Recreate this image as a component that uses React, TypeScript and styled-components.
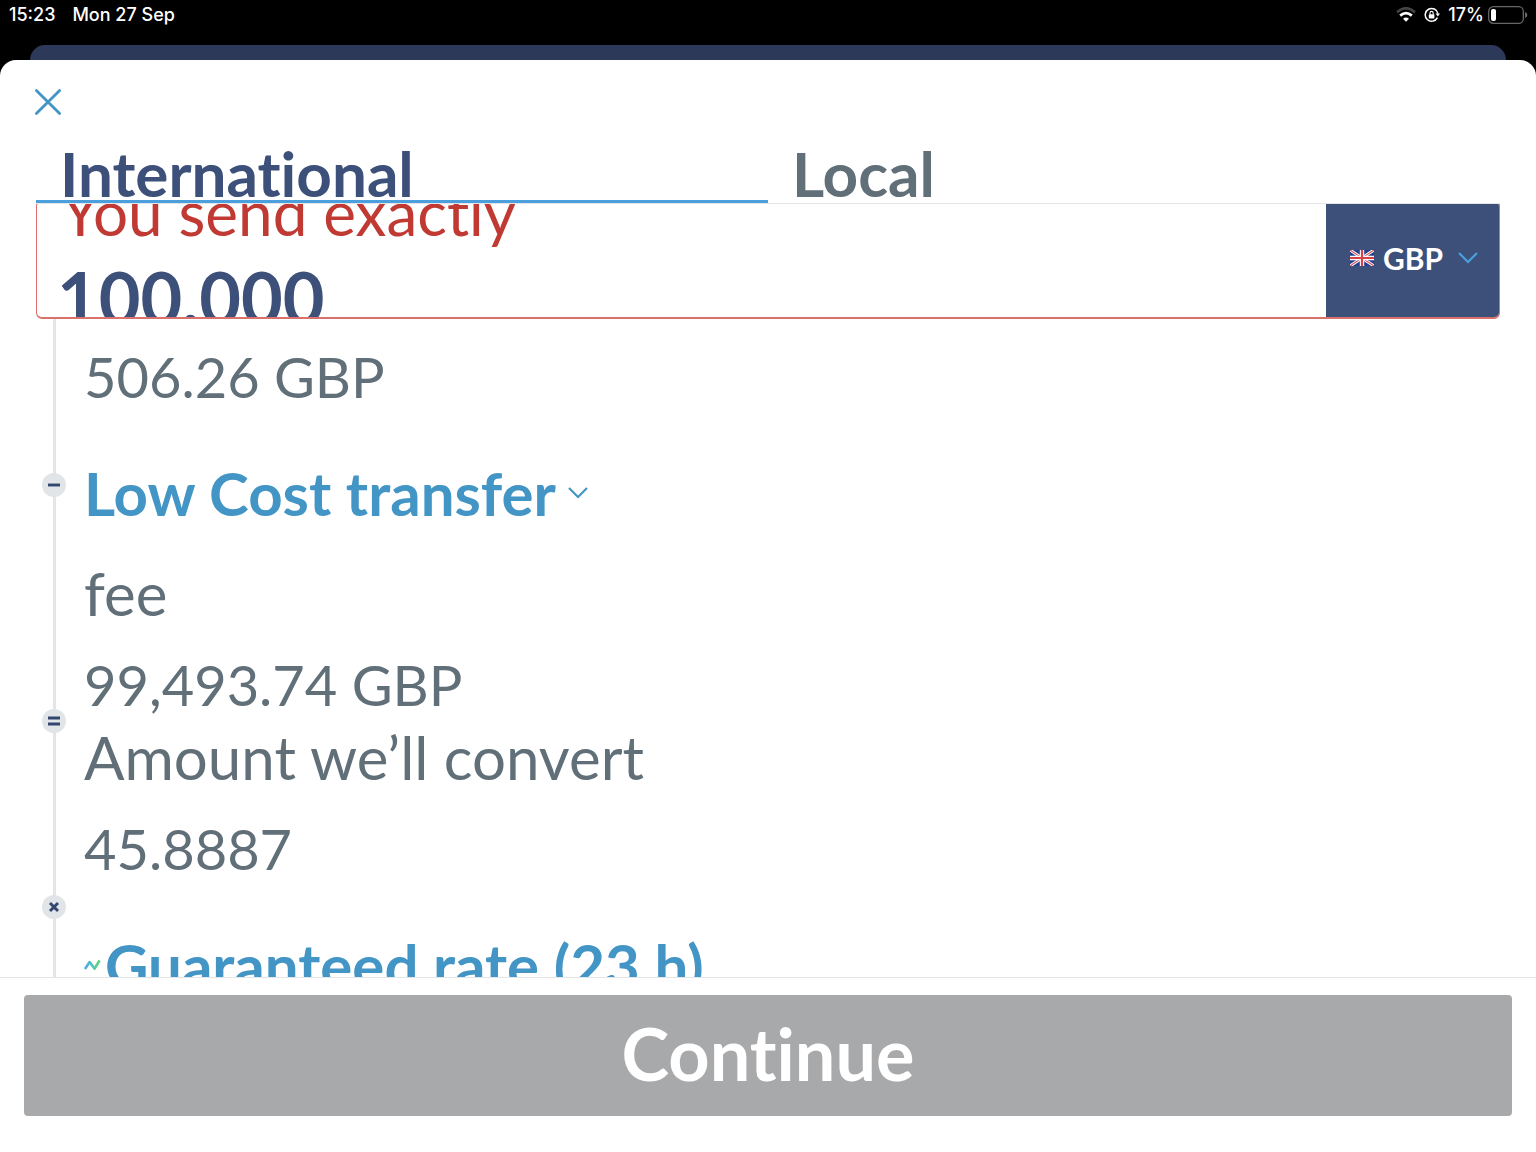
import React, { useState } from "react";
import styled, { createGlobalStyle } from "styled-components";

const color = {
  navy: "#3d5079",
  navyDeep: "#2c3959",
  navyInk: "#33466f",
  blue: "#4295c5",
  sky: "#4a9fdc",
  slate: "#616f79",
  red: "#c03a33",
  redLine: "#dc706c",
  rail: "#e4e5e7",
  badge: "#e1e5e8",
  disabled: "#a8a9ab",
};

const GlobalStyle = createGlobalStyle`
  *, *::before, *::after { box-sizing: border-box; }
  body {
    margin: 0;
    background: #000;
    font-family: Lato, "Open Sans", sans-serif;
    font-variant-ligatures: none;
  }
  button, input, select { font: inherit; font-variant-ligatures: none; color: inherit; }
  button { padding: 0; border: 0; background: none; cursor: pointer; text-align: left; }
`;

const Screen = styled.div`
  display: flex;
  flex-direction: column;
  height: 100vh;
  overflow: hidden;
`;

const StatusBar = styled.header`
  display: flex;
  flex: none;
  justify-content: space-between;
  height: 45px;
  padding: 5px 8px 0 9px;
  color: #fff;
  font: 500 18px/20px Inter, sans-serif;
`;

const StatusGroup = styled.div<{ $gap: number }>`
  display: flex;
  align-items: center;
  height: 20px;
  gap: ${(p) => p.$gap}px;
`;

const Charge = styled.span`
  display: flex;
  align-items: center;
  gap: 4px;
`;

const BackSheet = styled.div`
  flex: none;
  height: 15px;
  margin: 0 30px;
  border-radius: 15px 15px 0 0;
  background: ${color.navyDeep};
`;

const Sheet = styled.main`
  display: flex;
  flex: 1;
  flex-direction: column;
  min-height: 0;
  border-radius: 16px 16px 0 0;
  background: #fff;
`;

const CloseButton = styled.button`
  display: flex;
  flex: none;
  width: 28px;
  height: 28px;
  margin: 28px 34px 24px;
  color: ${color.blue};
`;

const Tabs = styled.div`
  display: flex;
  flex: none;
  margin: 0 36px;
  border-bottom: 1px solid ${color.rail};
`;

const Tab = styled.button<{ $active: boolean }>`
  flex: 1;
  height: 63px;
  padding: 0 24px;
  border-bottom: 3px solid ${(p) => (p.$active ? color.sky : "transparent")};
  color: ${(p) => (p.$active ? color.navy : color.slate)};
  font-size: 62px;
  font-weight: 700;
  line-height: 66px;
`;

const Scroller = styled.section`
  flex: 1;
  min-height: 0;
  padding: 0 36px;
  overflow: hidden;
`;

const Field = styled.div`
  display: flex;
  height: 119px;
  margin-top: -4px;
  overflow: hidden;
  border: solid ${color.redLine};
  border-width: 2px 1px;
  border-radius: 6px;
`;

const FieldBody = styled.div`
  flex: 1;
  min-width: 0;
  padding-left: 20px;
`;

const FieldLabel = styled.label`
  display: block;
  margin-top: -26px;
  padding-left: 4px;
  color: ${color.red};
  font-size: 62px;
  line-height: 72px;
`;

const AmountInput = styled.input`
  display: block;
  width: 100%;
  height: 98px;
  padding: 0;
  border: 0;
  outline: 0;
  background: none;
  color: ${color.navy};
  font-size: 72px;
  font-weight: 700;
`;

const Currency = styled.div`
  display: flex;
  flex: none;
  align-items: center;
  width: 173px;
  gap: 9px;
  padding: 0 0 4px 24px;
  background: ${color.navy};
  color: #fff;
`;

const CurrencySelect = styled.select`
  width: 66px;
  padding: 0;
  border: 0;
  outline: 0;
  appearance: none;
  background: none;
  font-size: 30px;
  font-weight: 700;
  line-height: 36px;
`;

const Steps = styled.ul`
  margin: 0 0 0 17px;
  padding: 12px 0 0;
  border-left: 3px solid ${color.rail};
  list-style: none;
`;

const Step = styled.li`
  display: flex;
  align-items: center;
  gap: 18px;
  padding: 10px 0;
  margin-left: -14px;
  color: ${color.slate};
  font-size: 60px;
  line-height: 72px;
`;

const Figure = styled.div`
  font-size: 56px;
`;

const Badge = styled.span`
  display: flex;
  flex: none;
  width: 24px;
  height: 24px;
  border-radius: 50%;
  background: ${color.badge};
  color: ${color.navyInk};
`;

const StepButton = styled.button`
  display: flex;
  align-items: center;
  gap: 4px;
  color: ${color.blue};
  font-weight: 700;
`;

const OptionButton = styled(StepButton)`
  gap: 12px;
  margin: 44px 0 28px;
`;

const RateButton = styled(StepButton)`
  margin-top: 44px;
`;

const Footer = styled.footer`
  flex: none;
  padding: 17px 24px 36px;
  border-top: 1px solid ${color.rail};
`;

const ContinueButton = styled.button`
  display: block;
  width: 100%;
  height: 121px;
  padding-bottom: 6px;
  border-radius: 4px;
  background: ${color.disabled};
  color: #fff;
  font-size: 72px;
  font-weight: 700;
  line-height: 84px;
  text-align: center;
`;

const WifiIcon = () => (
  <svg width="20" height="16" viewBox="0 0 20 16" aria-hidden="true">
    <path d="M1 5.2Q10-2.8 19 5.2" fill="none" stroke="#444" strokeWidth="2.6" />
    <path d="M4.2 8.6Q10 3.6 15.8 8.6" fill="none" stroke="#fff" strokeWidth="2.8" />
    <path d="M7 11.8Q10 9.2 13 11.8L10 14.8Z" fill="#fff" />
  </svg>
);

const RotationLockIcon = () => (
  <svg width="16" height="16" viewBox="0 0 16 16" fill="none" stroke="#fff" aria-hidden="true">
    <path d="M13.4 10.6A6.4 6.4 0 1 1 13.9 6.6" strokeWidth="1.5" />
    <path d="M11.6 6.6h4.4l-2.2 3Z" fill="#fff" stroke="none" />
    <rect x="4.8" y="7.2" width="5.6" height="4.2" rx=".6" fill="#fff" stroke="none" />
    <path d="M6 7.4V6a1.6 1.6 0 0 1 3.2 0v1.4" strokeWidth="1.1" />
  </svg>
);

const BatteryIcon = () => (
  <svg width="40" height="18" viewBox="0 0 40 18" aria-hidden="true">
    <rect x=".7" y=".7" width="34.6" height="16.6" rx="4.6" fill="none" stroke="#666" strokeWidth="1.3" />
    <rect x="3" y="3" width="5" height="12" rx="2" fill="#fff" />
    <path d="M37 6v6q2.4-1 2.4-3T37 6Z" fill="#666" />
  </svg>
);

const CloseIcon = () => (
  <svg width="28" height="28" viewBox="0 0 28 28" fill="none" stroke="currentColor" strokeWidth="2.8" strokeLinecap="round" aria-hidden="true">
    <path d="M2.4 2.4 25.6 25.6M25.6 2.4 2.4 25.6" />
  </svg>
);

const Chevron = ({ tint }: { tint: string }) => (
  <svg width="20" height="12" viewBox="0 0 20 12" fill="none" stroke={tint} strokeWidth="2.2" aria-hidden="true">
    <path d="M1 1 10 10 19 1" />
  </svg>
);

const FlagIcon = () => (
  <svg width="24" height="16" viewBox="0 0 24 16" aria-hidden="true">
    <rect width="24" height="16" fill="#25408f" />
    <path d="M0 0 24 16M24 0 0 16" stroke="#fff" strokeWidth="3" />
    <path d="M0 0 24 16M24 0 0 16" stroke="#d9505a" strokeWidth="1.1" />
    <path d="M12 0V16M0 8H24" stroke="#fff" strokeWidth="4.4" />
    <path d="M12 0V16M0 8H24" stroke="#d9404a" strokeWidth="2.2" />
  </svg>
);

const signPaths = {
  minus: "M6 12H18",
  equals: "M6 9H18M6 15H18",
  times: "M8 8 16 16M16 8 8 16",
};

const SignBadge = ({ sign }: { sign: keyof typeof signPaths }) => (
  <Badge>
    <svg width="24" height="24" viewBox="0 0 24 24" fill="none" stroke="currentColor" strokeWidth="2.9" aria-hidden="true">
      <path d={signPaths[sign]} />
    </svg>
  </Badge>
);

const RateIcon = () => (
  <svg width="17" height="12" viewBox="0 0 17 12" fill="none" strokeWidth="2.6" strokeLinejoin="round" aria-hidden="true">
    <defs>
      <linearGradient id="rate" x1="0" x2="1" y1="0" y2="0">
        <stop offset="0" stopColor="#46a9e8" />
        <stop offset=".55" stopColor="#56c8b0" />
        <stop offset="1" stopColor="#5fd07c" />
      </linearGradient>
    </defs>
    <path d="M1 10 5.6 3 10.6 9.6 15.6 1.4" stroke="url(#rate)" />
  </svg>
);

const tabs = ["International", "Local"];

export default function App() {
  const [active, setActive] = useState(tabs[0]);
  const [amount, setAmount] = useState("100,000");

  return (
    <>
      <GlobalStyle />
      <Screen>
        <StatusBar>
          <StatusGroup $gap={17}>
            <span>15:23</span>
            <span>Mon 27 Sep</span>
          </StatusGroup>
          <StatusGroup $gap={8}>
            <WifiIcon />
            <RotationLockIcon />
            <Charge>
              17%
              <BatteryIcon />
            </Charge>
          </StatusGroup>
        </StatusBar>
        <BackSheet />
        <Sheet>
          <CloseButton aria-label="Close">
            <CloseIcon />
          </CloseButton>
          <Tabs role="tablist">
            {tabs.map((name) => (
              <Tab key={name} role="tab" aria-selected={name === active} $active={name === active} onClick={() => setActive(name)}>
                {name}
              </Tab>
            ))}
          </Tabs>
          <Scroller>
            <Field>
              <FieldBody>
                <FieldLabel htmlFor="amount">You send exactly</FieldLabel>
                <AmountInput id="amount" inputMode="decimal" value={amount} onChange={(e) => setAmount(e.target.value)} />
              </FieldBody>
              <Currency>
                <FlagIcon />
                <CurrencySelect aria-label="Currency" defaultValue="GBP">
                  <option>GBP</option>
                </CurrencySelect>
                <Chevron tint={color.sky} />
              </Currency>
            </Field>
            <Steps>
              <Step>
                <SignBadge sign="minus" />
                <div>
                  <Figure>506.26 GBP</Figure>
                  <OptionButton>
                    Low Cost transfer
                    <Chevron tint={color.blue} />
                  </OptionButton>
                  <div>fee</div>
                </div>
              </Step>
              <Step>
                <SignBadge sign="equals" />
                <div>
                  <Figure>99,493.74 GBP</Figure>
                  <div>Amount we’ll convert</div>
                </div>
              </Step>
              <Step>
                <SignBadge sign="times" />
                <div>
                  <Figure>45.8887</Figure>
                  <RateButton>
                    <RateIcon />
                    Guaranteed rate (23 h)
                  </RateButton>
                </div>
              </Step>
            </Steps>
          </Scroller>
          <Footer>
            <ContinueButton>Continue</ContinueButton>
          </Footer>
        </Sheet>
      </Screen>
    </>
  );
}
